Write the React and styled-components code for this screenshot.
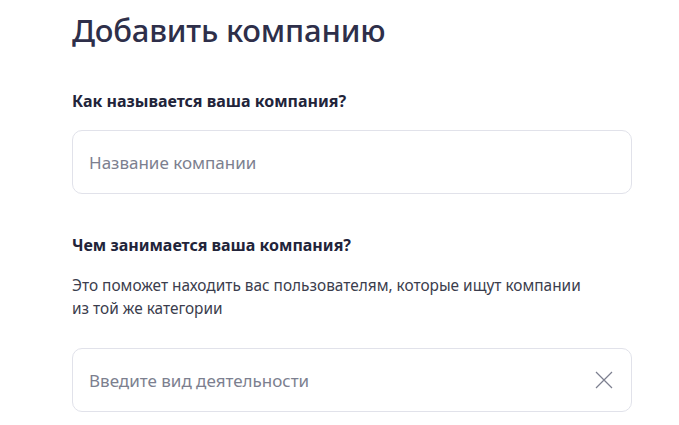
import React from 'react';
import styled, { createGlobalStyle } from 'styled-components';

const GlobalStyle = createGlobalStyle`
  body {
    margin: 0;
    background: #fff;
    font-family: "Noto Sans", "Open Sans", sans-serif;
    color: #2b2d42;
  }
`;

const Page = styled.div`
  width: 560px;
  padding: 8px 0 0 72px;
`;

const Title = styled.h1`
  margin: 0;
  font-size: 31px;
  line-height: 44px;
  font-weight: 500;
  color: #2e2f4a;
  letter-spacing: -0.2px;
`;

const Section = styled.section`
  margin-top: ${(p) => p.$top}px;
`;

const Label = styled.h2`
  margin: 0;
  font-size: 16px;
  line-height: 22px;
  font-weight: 700;
  color: #22243a;
`;

const Hint = styled.p`
  margin: 18px 0 0;
  font-size: 15.4px;
  line-height: 23px;
  color: #3b3d4d;
`;

const Field = styled.div`
  display: flex;
  align-items: center;
  height: 64px;
  margin-top: ${(p) => p.$top}px;
  padding: 0 18px 0 16px;
  border: 1px solid #e1e2ea;
  border-radius: 10px;
  box-sizing: border-box;
`;

const Input = styled.input`
  flex: 1;
  border: none;
  outline: none;
  padding: 0;
  font-family: inherit;
  font-size: 17px;
  color: #2b2d42;
  background: transparent;

  &::placeholder {
    color: #7c7f8f;
  }
`;

const Clear = styled.button`
  display: flex;
  border: none;
  background: none;
  padding: 0;
  cursor: pointer;
`;

const App = () => (
  <>
    <GlobalStyle />
    <Page>
      <Title>Добавить компанию</Title>
      <Section $top={38}>
        <Label>Как называется ваша компания?</Label>
        <Field $top={18}>
          <Input placeholder="Название компании" />
        </Field>
      </Section>
      <Section $top={40}>
        <Label>Чем занимается ваша компания?</Label>
        <Hint>
          Это поможет находить вас пользователям, которые ищут компании
          <br />
          из той же категории
        </Hint>
        <Field $top={28}>
          <Input placeholder="Введите вид деятельности" />
          <Clear aria-label="Очистить">
            <svg width="18" height="18" viewBox="0 0 18 18" fill="none">
              <path d="M1 1L17 17M17 1L1 17" stroke="#7c7f8f" strokeWidth="1.2" />
            </svg>
          </Clear>
        </Field>
      </Section>
    </Page>
  </>
);

export default App;
